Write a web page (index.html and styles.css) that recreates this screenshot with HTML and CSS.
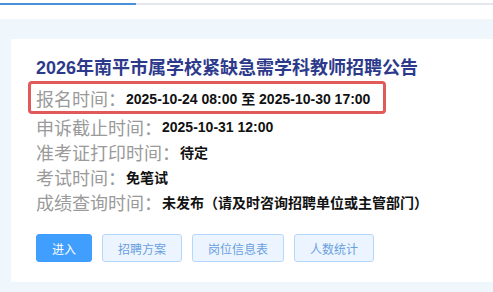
FILE: index.html
```html
<!doctype html>
<html lang="zh-CN">
<head>
    <meta charset="UTF-8">
    <title>招聘公告</title>
    <link rel="stylesheet" href="styles.css">
</head>
<body>
<div class="progress"><div class="progress-bar"></div></div>
<div class="main">
    <div class="card">
        <h1 class="title">2026年南平市属学校紧缺急需学科教师招聘公告</h1>
        <div class="row row-highlight">
            <span class="label">报名时间：</span><span class="value">2025-10-24 08:00 至 2025-10-30 17:00</span>
        </div>
        <div class="row">
            <span class="label">申诉截止时间：</span><span class="value">2025-10-31 12:00</span>
        </div>
        <div class="row">
            <span class="label">准考证打印时间：</span><span class="value">待定</span>
        </div>
        <div class="row">
            <span class="label">考试时间：</span><span class="value">免笔试</span>
        </div>
        <div class="row">
            <span class="label">成绩查询时间：</span><span class="value">未发布（请及时咨询招聘单位或主管部门）</span>
        </div>
        <div class="actions">
            <button class="btn btn-primary">进入</button>
            <button class="btn btn-plain">招聘方案</button>
            <button class="btn btn-plain">岗位信息表</button>
            <button class="btn btn-plain">人数统计</button>
        </div>
    </div>
</div>
</body>
</html>
```

FILE: styles.css
```css
body {
    margin: 0;
    background: #fff;
    font-family: "Liberation Sans", "Noto Sans CJK SC", sans-serif;
    overflow: hidden;
}
.progress {
    margin-top: 3px;
    height: 2px;
    background: #e4e7ed;
}
.progress-bar {
    width: 136px;
    height: 100%;
    background: #4a90d9;
}
.main {
    margin-top: 14px;
    background: #eff6fc;
    padding: 20px 0 10px 11px;
}
.card {
    background: #fff;
    padding: 17px 0 20px 25px;
}
.title {
    margin: 0;
    font-size: 18px;
    line-height: 24px;
    font-weight: bold;
    color: #2d3a8c;
}
.row {
    display: flex;
    align-items: center;
    height: 25px;
    white-space: nowrap;
}
.row-highlight {
    margin: 1px 0 0 -8px;
    padding: 0 0 0 5px;
    width: 347px;
    height: 27px;
    border: 3px solid #e15a5a;
    border-radius: 4px;
}
.label {
    font-size: 18px;
    color: #9a9a9a;
}
.value {
    font-size: 14px;
    font-weight: bold;
    color: #111;
}
.actions {
    display: flex;
    gap: 10px;
    margin-top: 20px;
}
.btn {
    height: 28px;
    padding: 0 15px;
    font-family: inherit;
    font-size: 12px;
    border-radius: 3px;
    border: 1px solid;
}
.btn-primary {
    background: #409eff;
    border-color: #409eff;
    color: #fff;
}
.btn-plain {
    background: #ecf5ff;
    border-color: #b3d8ff;
    color: #6a9fde;
}
```
